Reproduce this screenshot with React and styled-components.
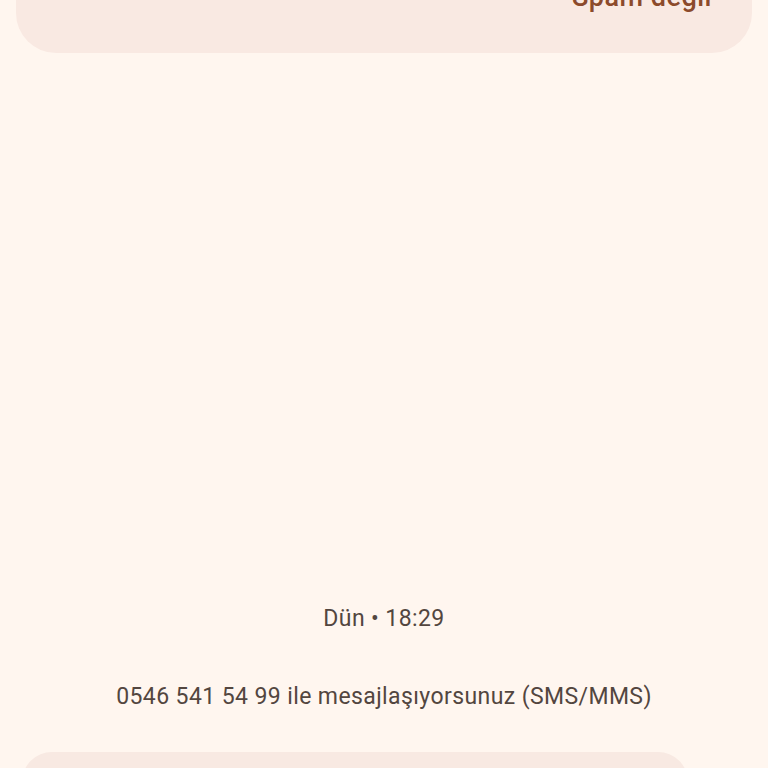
import React from 'react';
import styled, { createGlobalStyle } from 'styled-components';

const GlobalStyle = createGlobalStyle`
  html, body {
    margin: 0;
    padding: 0;
    background: #fff6ef;
    font-family: Roboto, "Noto Sans", sans-serif;
  }
  #root {
    height: 768px;
    overflow: hidden;
  }
`;

const Screen = styled.div`
  width: 768px;
  height: 768px;
  background: #fff6ef;
  display: flex;
  flex-direction: column;
  overflow: hidden;
`;

const SpamCard = styled.div`
  margin: -80px 16px 0;
  height: 133px;
  background: #f9e9e2;
  border-radius: 40px;
  display: flex;
  align-items: flex-end;
  justify-content: flex-end;
  padding: 0 40px 41px;
  box-sizing: border-box;
`;

const SpamButton = styled.span`
  font-size: 27px;
  font-weight: 500;
  letter-spacing: 0.5px;
  color: #8c4a2b;
  line-height: 30px;
`;

const Spacer = styled.div`
  flex: 1;
`;

const Meta = styled.div`
  text-align: center;
  color: #53463f;
  font-size: 23px;
  letter-spacing: 0.4px;
  line-height: 28px;
  margin-bottom: ${(p) => p.$gap}px;
`;

const Composer = styled.div`
  margin: 0 80px 0 22px;
  height: 60px;
  margin-bottom: -44px;
  background: #f8e9e2;
  border-radius: 30px;
`;

export default function App() {
  return (
    <>
      <GlobalStyle />
      <Screen>
        <SpamCard>
          <SpamButton>Spam değil</SpamButton>
        </SpamCard>
        <Spacer />
        <Meta $gap={50}>Dün • 18:29</Meta>
        <Meta $gap={41}>0546 541 54 99 ile mesajlaşıyorsunuz (SMS/MMS)</Meta>
        <Composer />
      </Screen>
    </>
  );
}
